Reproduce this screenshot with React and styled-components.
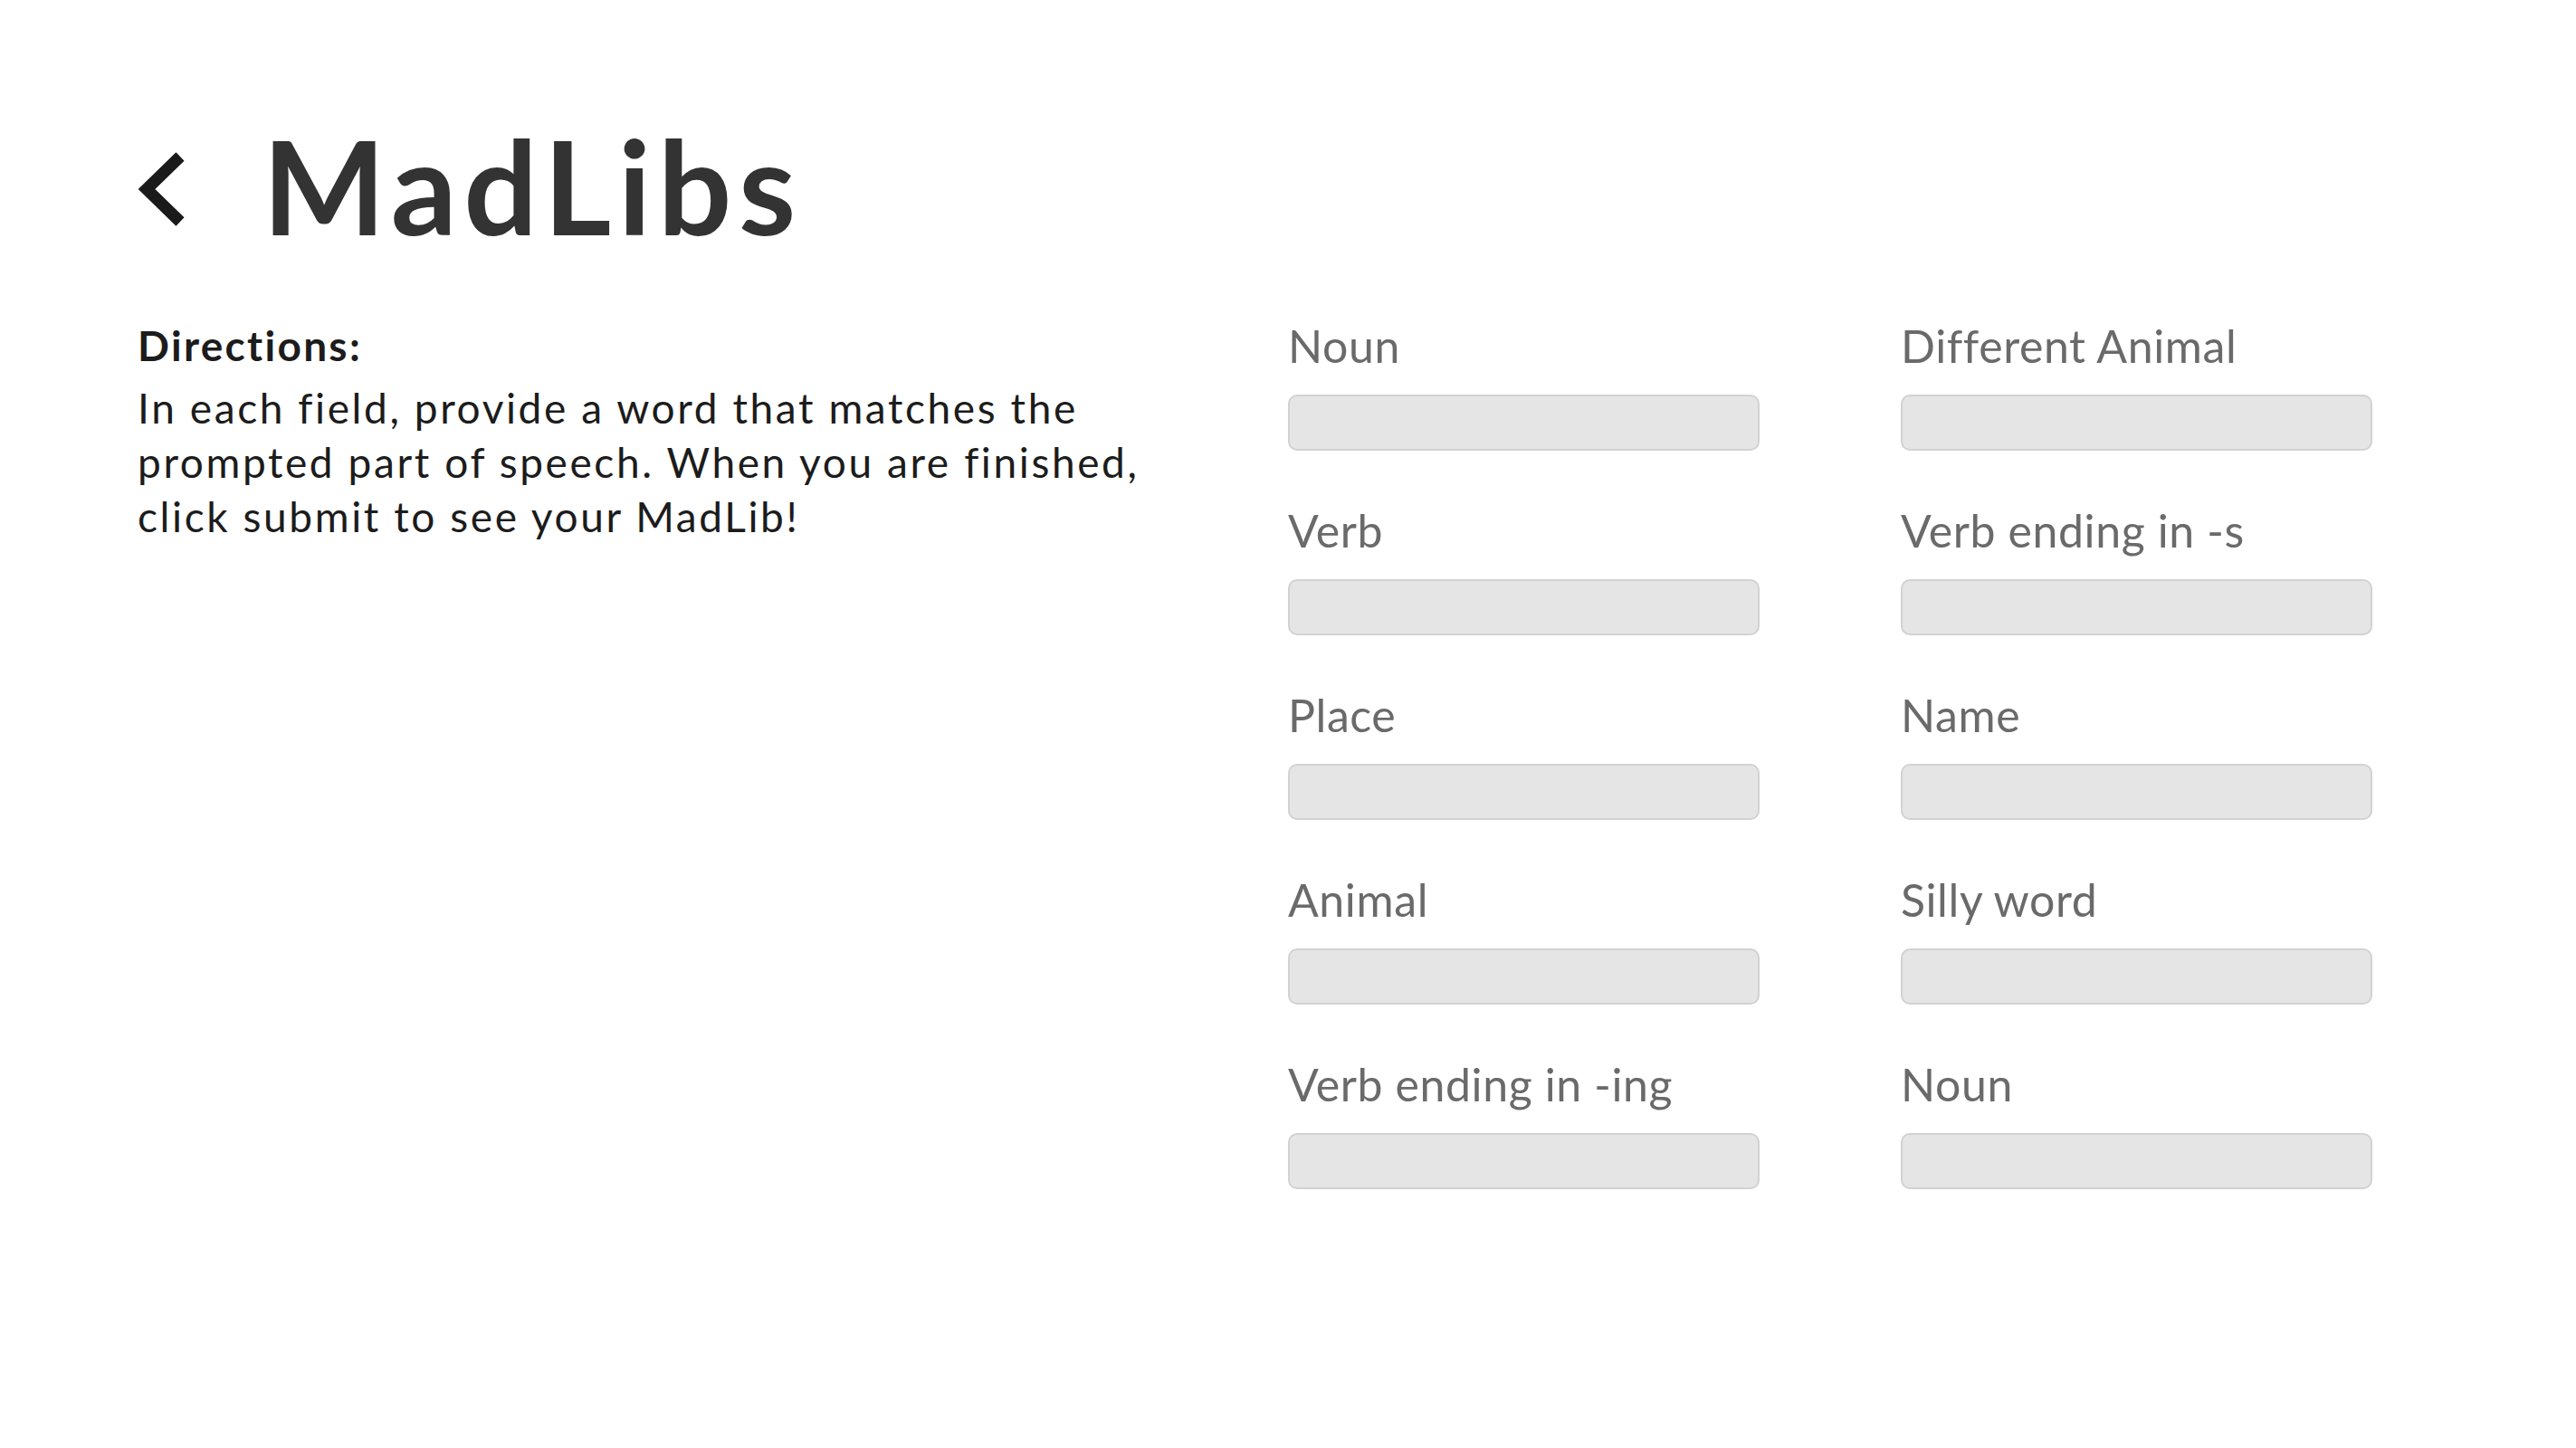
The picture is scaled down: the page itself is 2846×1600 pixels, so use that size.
import React from "react";
import styled, { createGlobalStyle } from "styled-components";

const GlobalStyle = createGlobalStyle`
  html, body {
    margin: 0;
    padding: 0;
    background: #ffffff;
  }
  body {
    font-family: "Lato", "Open Sans", sans-serif;
  }
`;

const StyledPage = styled.div`
  box-sizing: border-box;
  width: 2846px;
  min-height: 1600px;
  padding: 133px 0 0 152px;
  background: #ffffff;
`;

const Header = styled.header`
  display: flex;
  align-items: center;
  gap: 86px;
  height: 144px;

  .back-icon {
    display: block;
    width: 52px;
    height: 82px;
    margin-top: 8px;
    flex-shrink: 0;
  }
`;

const Title = styled.h1`
  margin: 0;
  font-family: "Lato", sans-serif;
  font-weight: 700;
  font-size: 144px;
  line-height: 144px;
  letter-spacing: 7.5px;
  color: #333333;
`;

const Content = styled.main`
  display: flex;
  align-items: flex-start;
  gap: 91px;
  margin-top: 75px;
`;

const Directions = styled.section`
  width: 1180px;
  flex-shrink: 0;
  color: #1c1c1c;
  font-family: "Lato", sans-serif;
  font-size: 46px;
  line-height: 60px;
  letter-spacing: 2.6px;

  h2 {
    margin: 0 0 9px;
    font-size: 46px;
    line-height: 60px;
    font-weight: 700;
    letter-spacing: 2.3px;
  }

  p {
    margin: 0;
    font-weight: 400;
  }
`;

const FieldGrid = styled.form`
  display: grid;
  grid-template-columns: 521px 521px;
  column-gap: 156px;
  row-gap: 58px;
`;

const Field = styled.label`
  display: flex;
  flex-direction: column;
  gap: 24px;
`;

const FieldLabel = styled.span`
  font-family: "Lato", sans-serif;
  font-weight: 400;
  font-size: 50px;
  line-height: 60px;
  letter-spacing: 0.6px;
  color: #6a6a6a;
  white-space: nowrap;
`;

const FieldInput = styled.input`
  box-sizing: border-box;
  width: 100%;
  height: 62px;
  margin: 0;
  padding: 0 16px;
  background: #e5e5e5;
  border: 2px solid #d2d2d2;
  border-radius: 10px;
  font-family: "Lato", sans-serif;
  font-size: 36px;
  outline: none;
`;

const fields = [
  "Noun",
  "Different Animal",
  "Verb",
  "Verb ending in -s",
  "Place",
  "Name",
  "Animal",
  "Silly word",
  "Verb ending in -ing",
  "Noun",
];

function BackIcon() {
  return (
    <svg className="back-icon" viewBox="0 0 52 82" aria-hidden="true">
      <path
        d="M47 5 L10 41 L47 77"
        fill="none"
        stroke="#1a1a1a"
        strokeWidth="13"
        strokeLinecap="butt"
        strokeLinejoin="miter"
      />
    </svg>
  );
}

export default function App() {
  return (
    <>
      <GlobalStyle />
      <StyledPage>
        <Header>
          <BackIcon />
          <Title>MadLibs</Title>
        </Header>
        <Content>
          <Directions>
            <h2>Directions:</h2>
            <p>
              In each field, provide a word that matches the prompted part of
              speech. When you are finished, click submit to see your MadLib!
            </p>
          </Directions>
          <FieldGrid onSubmit={(e) => e.preventDefault()}>
            {fields.map((name, i) => (
              <Field key={i}>
                <FieldLabel>{name}</FieldLabel>
                <FieldInput type="text" />
              </Field>
            ))}
          </FieldGrid>
        </Content>
      </StyledPage>
    </>
  );
}
